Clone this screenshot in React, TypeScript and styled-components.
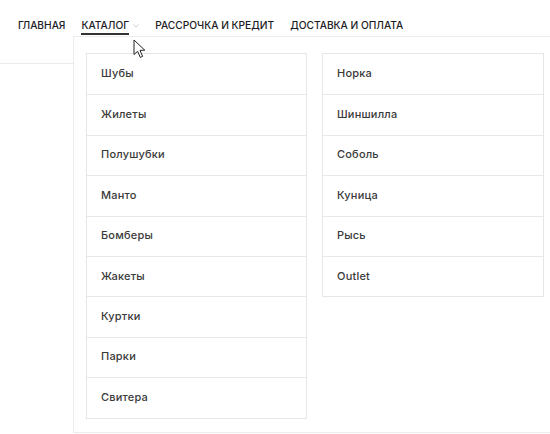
import React from "react";
import styled, { createGlobalStyle } from "styled-components";

const GlobalStyle = createGlobalStyle`
	html, body {
		margin: 0;
		background: #fff;
	}
	body {
		font-family: Inter, "Open Sans", "Liberation Sans", sans-serif;
		color: #222;
	}
`;

const menu = [
	{ title: "ГЛАВНАЯ" },
	{ title: "КАТАЛОГ", active: true, dropdown: true },
	{ title: "РАССРОЧКА И КРЕДИТ" },
	{ title: "ДОСТАВКА И ОПЛАТА" },
];

// types of fur goods
const kinds = ["Шубы", "Жилеты", "Полушубки", "Манто", "Бомберы", "Жакеты", "Куртки", "Парки", "Свитера"];
// kinds of fur
const furs = ["Норка", "Шиншилла", "Соболь", "Куница", "Рысь", "Outlet"];

function App() {
	return (
		<>
			<GlobalStyle />
			<Header>
				<Nav>
					{menu.map((item) => (
						<NavItem key={item.title}>
							<NavLink $active={item.active}>{item.title}</NavLink>
							{item.dropdown ? (
								<Chevron width="6" height="4" viewBox="0 0 6 4">
									<path d="M0.5 0.5 L3 3 L5.5 0.5" fill="none" stroke="#c4c4c4" strokeWidth="0.9" />
								</Chevron>
							) : null}
						</NavItem>
					))}
				</Nav>

				{/* Catalog dropdown */}
				<Dropdown>
					<Column>
						{kinds.map((k) => (
							<Row key={k}>{k}</Row>
						))}
					</Column>
					<Column>
						{furs.map((k) => (
							<Row key={k}>{k}</Row>
						))}
					</Column>
				</Dropdown>

				<Cursor width="13" height="20" viewBox="0 0 13 20">
					<path
						d="M1 1 L1 15.5 L4.6 12.3 L7.3 18.4 L9.6 17.4 L7 11.4 L11.8 11.2 Z"
						fill="#fff"
						stroke="#222"
						strokeWidth="1"
						strokeLinejoin="round"
					/>
				</Cursor>
			</Header>
		</>
	);
}

const Header = styled.header`
	position: relative;
	height: 434px;
	overflow: hidden;

	/* bottom line of the page header, under the dropdown */
	&::before {
		content: "";
		position: absolute;
		left: 0;
		right: 0;
		top: 63px;
		height: 1px;
		background: #ebebeb;
	}
`;

const Nav = styled.nav`
	display: flex;
	gap: 16px;
	padding: 19px 0 0 18px;
`;

const NavItem = styled.div`
	display: flex;
	align-items: center;
	gap: 3px;
`;

const NavLink = styled.a<{ $active?: boolean }>`
	font-size: 10.2px;
	font-weight: 500;
	line-height: 13px;
	color: #1c1c24;
	padding-bottom: 1px;
	border-bottom: 2px solid ${(p) => (p.$active ? "#333" : "transparent")};
	cursor: pointer;
`;

const Chevron = styled.svg`
	margin: 0 0 2px 1px;
`;

const Dropdown = styled.div`
	position: absolute;
	top: 36px;
	left: 73px;
	right: -20px;
	height: 397px;
	box-sizing: border-box;
	background: #fff;
	border: 1px solid #ececec;
	padding: 16px 12px 15px;
	display: grid;
	grid-template-columns: 221px 222px;
	column-gap: 15px;
	align-items: start;
`;

const Column = styled.ul`
	list-style: none;
	margin: 0;
	padding: 0;
	border: 1px solid #e6e6e6;
`;

const Row = styled.li`
	height: 40.4px;
	box-sizing: border-box;
	display: flex;
	align-items: center;
	padding: 0 14px 2px;
	font-size: 11px;
	font-weight: 500;
	letter-spacing: 0.2px;
	color: #3a3a3a;
	border-top: 1px solid #e8e8e8;
	cursor: pointer;

	&:first-child {
		border-top: none;
	}
`;

const Cursor = styled.svg`
	position: absolute;
	left: 133px;
	top: 39px;
`;

export default App;
